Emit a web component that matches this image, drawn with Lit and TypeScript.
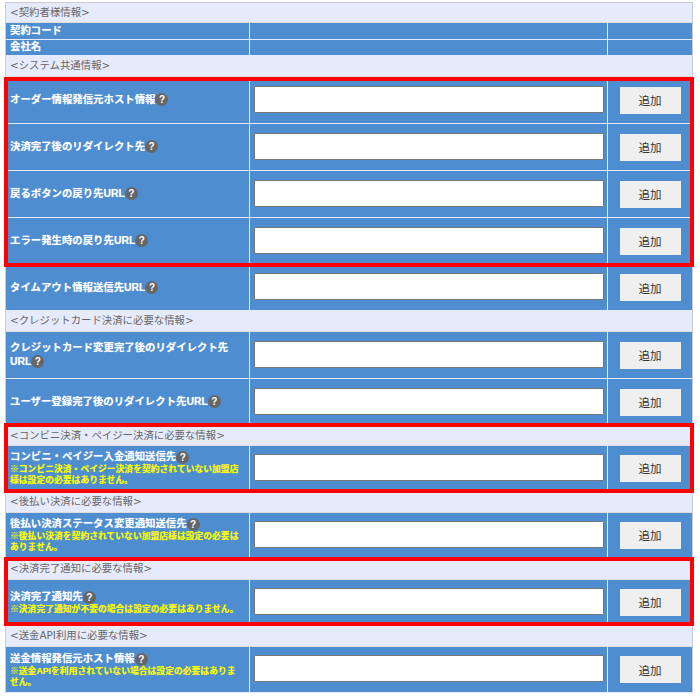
import { LitElement, html, css } from "lit";
import { customElement } from "lit/decorators.js";

type Row =
  | { s: string; h: number }
  | { l?: string; n?: string; h: number; plain?: boolean };

const rows: Row[] = [
  { s: "<契約者様情報>", h: 20 },
  { l: "契約コード", h: 17, plain: true },
  { l: "会社名", h: 16, plain: true },
  { s: "<システム共通情報>", h: 21 },
  { l: "オーダー情報発信元ホスト情報", h: 47 },
  { l: "決済完了後のリダイレクト先", h: 47 },
  { l: "戻るボタンの戻り先URL", h: 47 },
  { l: "エラー発生時の戻り先URL", h: 47 },
  { l: "タイムアウト情報送信先URL", h: 46 },
  { s: "<クレジットカード決済に必要な情報>", h: 21 },
  { l: "クレジットカード変更完了後のリダイレクト先URL", h: 47 },
  { l: "ユーザー登録完了後のリダイレクト先URL", h: 47 },
  { s: "<コンビニ決済・ペイジー決済に必要な情報>", h: 20 },
  { l: "コンビニ・ペイジー入金通知送信先", n: "※コンビニ決済・ペイジー決済を契約されていない加盟店様は設定の必要はありません。", h: 45 },
  { s: "<後払い決済に必要な情報>", h: 22 },
  { l: "後払い決済ステータス変更通知送信先", n: "※後払い決済を契約されていない加盟店様は設定の必要はありません。", h: 45 },
  { s: "<決済完了通知に必要な情報>", h: 22 },
  { l: "決済完了通知先", n: "※決済完了通知が不要の場合は設定の必要はありません。", h: 45 },
  { s: "<送金API利用に必要な情報>", h: 22 },
  { l: "送金情報発信元ホスト情報", n: "※送金APIを利用されていない場合は設定の必要はありません。", h: 46 },
];

@customElement("app-root")
export class AppRoot extends LitElement {
  static styles = css`
    :host { display: block; width: 700px; height: 696px; overflow: hidden; position: relative; background: #fff;
      font-family: "Liberation Sans", "Noto Sans CJK JP", sans-serif; }
    .wrap { padding: 2px 0 0 5px; }
    .tbl { width: 688px; border: 1px solid #ccc; border-width: 1px 1px 0 1px; box-sizing: border-box; }
    .row { display: grid; grid-template-columns: 243px 358px 1fr; grid-template-rows: minmax(0, 1fr); box-sizing: border-box; border-bottom: 1px solid #e6ebfc; }
    .sec { background: #e6ebfc; color: #666; font: 400 10.4px "DejaVu Sans", "Noto Sans CJK JP", sans-serif; padding: 0 0 3px 4px; display: flex; align-items: center; border-bottom: 1px solid #ddd; box-sizing: border-box; }
    .c { background: #4d8dd0; display: flex; align-items: center; justify-content: center; min-height: 0; }
    .c + .c { border-left: 1px solid #e6ebfc; }
    .lab { justify-content: flex-start; padding: 0 6px 0 4px; color: #fff; font-size: 10.4px; font-weight: 700; line-height: 14px; text-shadow: 0 0 1px rgba(255,255,255,.5); }
    .lab.plain { padding-bottom: 1px; line-height: 12px; }
    .lab.noted { line-height: 11px; padding-top: 1px; }
    .note { display: block; color: #ff0; font-size: 8.8px; line-height: 10.6px; text-shadow: 0 0 1px rgba(255,255,0,.5); }
    .q { display: inline-block; width: 13px; height: 13px; border-radius: 50%; background: #666; color: #fff; font: 700 10px/13px "Liberation Sans", sans-serif; text-align: center; vertical-align: top; text-shadow: none; }
    input { width: 350px; height: 27px; box-sizing: border-box; border: 1px solid #767676; border-radius: 1px; background: #fff; padding: 0; margin: 0 0 2px; }
    button { width: 61px; height: 27px; border: 0; background: #efefef; color: #333; font: 400 11.5px "Noto Sans CJK JP", sans-serif; padding: 0; }
    .red { position: absolute; border: 4px solid #f00; box-sizing: border-box; pointer-events: none; }
    .r1 { left: 4px; top: 77px; width: 690px; height: 190px; }
    .r2 { left: 4px; top: 423px; width: 690px; height: 70px; }
    .r3 { left: 4px; top: 557px; width: 690px; height: 69px; }
  `;
  render() {
    return html`<div class="wrap"><div class="tbl">
      ${rows.map((r) =>
        "s" in r
          ? html`<div class="sec" style="height:${r.h}px">${r.s}</div>`
          : html`<div class="row" style="height:${r.h}px">
              <div class="c lab ${r.plain ? "plain" : ""} ${r.n ? "noted" : ""}"><div>${r.l}${r.plain ? "" : html`<span class="q">?</span>`}${r.n ? html`<span class="note">${r.n}</span>` : ""}</div></div>
              <div class="c">${r.plain ? "" : html`<input />`}</div>
              <div class="c">${r.plain ? "" : html`<button>追加</button>`}</div>
            </div>`
      )}
    </div></div>
    <div class="red r1"></div><div class="red r2"></div><div class="red r3"></div>`;
  }
}
